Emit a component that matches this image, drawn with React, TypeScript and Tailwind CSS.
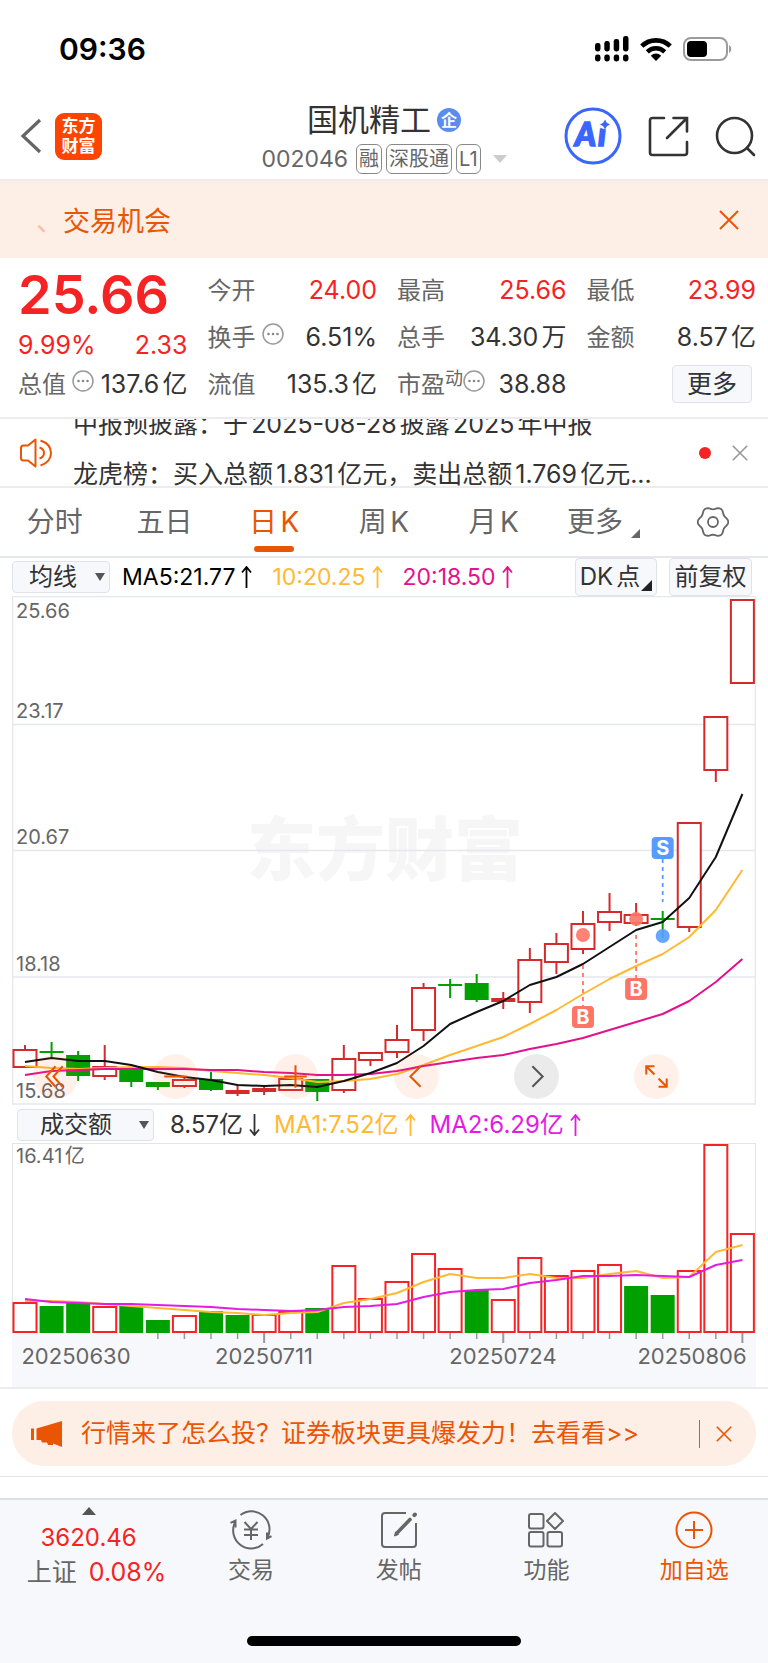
import React from 'react';

type Tone = 'up' | 'down';

interface Candle {
  high: number;
  top: number;
  bottom: number;
  low: number;
  tone: Tone;
  solid?: boolean;
}

const STEP = 26.57;
const FIRST = 13;
const cx = (i: number) => FIRST + i * STEP;

const toLine = (values: number[]) => values.map((v, i) => `${cx(i)},${v}`).join(' ');

const candles: Candle[] = [
  { high: 449, top: 454, bottom: 471, low: 471, tone: 'up' },
  { high: 446, top: 455, bottom: 457, low: 462, tone: 'down' },
  { high: 455, top: 459, bottom: 480, low: 485, tone: 'down' },
  { high: 449, top: 471, bottom: 480, low: 484, tone: 'up' },
  { high: 473, top: 473, bottom: 486, low: 491, tone: 'down' },
  { high: 486, top: 486, bottom: 491, low: 494, tone: 'down' },
  { high: 482, top: 484, bottom: 490, low: 492, tone: 'up' },
  { high: 476, top: 483, bottom: 494, low: 495, tone: 'down' },
  { high: 489, top: 494, bottom: 498, low: 500, tone: 'up', solid: true },
  { high: 489, top: 492, bottom: 496, low: 499, tone: 'up', solid: true },
  { high: 481, top: 483, bottom: 494, low: 495, tone: 'up' },
  { high: 483, top: 483, bottom: 496, low: 505, tone: 'down' },
  { high: 449, top: 463, bottom: 494, low: 497, tone: 'up' },
  { high: 456, top: 457, bottom: 464, low: 470, tone: 'up' },
  { high: 429, top: 444, bottom: 456, low: 462, tone: 'up' },
  { high: 387, top: 392, bottom: 434, low: 445, tone: 'up' },
  { high: 383, top: 388, bottom: 390, low: 402, tone: 'down' },
  { high: 378, top: 387, bottom: 404, low: 406, tone: 'down' },
  { high: 396, top: 402, bottom: 406, low: 413, tone: 'up', solid: true },
  { high: 352, top: 364, bottom: 406, low: 417, tone: 'up' },
  { high: 337, top: 348, bottom: 366, low: 378, tone: 'up' },
  { high: 315, top: 328, bottom: 353, low: 358, tone: 'up' },
  { high: 297, top: 316, bottom: 326, low: 335, tone: 'up' },
  { high: 307, top: 319, bottom: 327, low: 330, tone: 'up' },
  { high: 315, top: 322, bottom: 324, low: 342, tone: 'down' },
  { high: 227, top: 227, bottom: 331, low: 336, tone: 'up' },
  { high: 121, top: 121, bottom: 174, low: 186, tone: 'up' },
  { high: 4, top: 4, bottom: 87, low: 87, tone: 'up' },
];

const ma5 = [466, 462, 465, 465, 469, 476, 481, 484, 489, 490, 489, 491, 485, 477, 467, 450, 428, 416, 405, 389, 381, 368, 351, 334, 326, 302, 261, 198];
const ma10 = [470, 472, 473, 472, 471, 471, 472, 475, 477, 479, 482, 486, 485, 483, 478, 469, 459, 450, 441, 428, 414, 398, 383, 370, 358, 341, 314, 274];
const ma20 = [479, 475, 474, 473, 473, 473, 473, 474, 474, 476, 477, 479, 479, 478, 475, 470, 466, 462, 459, 453, 448, 442, 434, 426, 418, 405, 386, 363];

const priceLabels = [
  { text: '25.66', y: 22 },
  { text: '23.17', y: 122 },
  { text: '20.67', y: 248 },
  { text: '18.18', y: 375 },
  { text: '15.68', y: 502 },
];

const volumes: { top: number; tone: Tone }[] = [
  { top: 160, tone: 'up' },
  { top: 163, tone: 'down' },
  { top: 159, tone: 'down' },
  { top: 164, tone: 'up' },
  { top: 163, tone: 'down' },
  { top: 177, tone: 'down' },
  { top: 173, tone: 'up' },
  { top: 168, tone: 'down' },
  { top: 172, tone: 'down' },
  { top: 172, tone: 'up' },
  { top: 169, tone: 'up' },
  { top: 165, tone: 'down' },
  { top: 123, tone: 'up' },
  { top: 156, tone: 'up' },
  { top: 139, tone: 'up' },
  { top: 111, tone: 'up' },
  { top: 126, tone: 'up' },
  { top: 147, tone: 'down' },
  { top: 157, tone: 'up' },
  { top: 115, tone: 'up' },
  { top: 133, tone: 'up' },
  { top: 128, tone: 'up' },
  { top: 122, tone: 'up' },
  { top: 143, tone: 'down' },
  { top: 152, tone: 'down' },
  { top: 128, tone: 'up' },
  { top: 2, tone: 'up' },
  { top: 91, tone: 'up' },
];

const volMa1 = [158, 158, 159, 161, 163, 165, 167, 169, 170, 172, 170, 169, 160, 156, 150, 139, 131, 135, 135, 131, 135, 135, 131, 128, 135, 134, 109, 102];
const volMa2 = [156, 159, 160, 161, 161, 162, 163, 164, 166, 167, 168, 167, 164, 163, 161, 154, 149, 147, 146, 140, 137, 133, 133, 132, 133, 134, 122, 117];

const dates = [
  { text: '20250630', x: 64 },
  { text: '20250711', x: 252 },
  { text: '20250724', x: 491 },
  { text: '20250806', x: 680 },
];

// six soft lobes around the centre
const gearPoints = Array.from({ length: 72 }, (_, i) => {
  const angle = (i * Math.PI) / 36;
  const r = 14 + 1.3 * Math.cos(6 * angle);
  return `${16 + r * Math.cos(angle)},${16 + r * Math.sin(angle)}`;
}).join(' ');

const Dots: React.FC = () => (
  <svg className="w-[22px] h-[22px] shrink-0" viewBox="0 0 22 22" fill="none" aria-hidden="true">
    <circle cx="11" cy="11" r="10" stroke="#999" strokeWidth="1.5" />
    <circle cx="6.5" cy="11" r="1.3" fill="#888" />
    <circle cx="11" cy="11" r="1.3" fill="#888" />
    <circle cx="15.5" cy="11" r="1.3" fill="#888" />
  </svg>
);

const Cross: React.FC<{ className: string }> = ({ className }) => (
  <svg className={className} viewBox="0 0 20 20" fill="none" stroke="currentColor" strokeWidth="2" aria-hidden="true">
    <path d="M1 1L19 19M19 1L1 19" />
  </svg>
);

const Arrow: React.FC<{ down?: boolean }> = ({ down }) => (
  <svg
    className="ml-[6px] w-[11px] h-[22px]"
    viewBox="0 0 11 22"
    fill="none"
    stroke="currentColor"
    strokeWidth="1.8"
    role="img"
    aria-label={down ? '↓' : '↑'}
  >
    <path d={down ? 'M5.5 0V21M1 15.5L5.5 21L10 15.5' : 'M5.5 22V1M1 6.5L5.5 1L10 6.5'} />
  </svg>
);

const StatusBar: React.FC = () => (
  <div className="flex items-center justify-between h-[98px] pl-[59px] pr-[36px]">
    <span className="text-[30px] font-semibold text-black">09:36</span>
    <div className="flex items-center gap-[11px]">
      <svg className="w-[34px] h-[26px]" viewBox="0 0 34 26" aria-hidden="true">
        <rect x="0" y="7" width="5.5" height="8.5" rx="2.4" />
        <rect x="9.3" y="5" width="5.5" height="10.5" rx="2.4" />
        <rect x="18.7" y="3" width="5.5" height="12.5" rx="2.4" />
        <rect x="28" y="0" width="5.5" height="15.5" rx="2.4" />
        <rect x="0" y="18.5" width="5.5" height="7" rx="2.4" />
        <rect x="9.3" y="18.5" width="5.5" height="7" rx="2.4" />
        <rect x="18.7" y="18.5" width="5.5" height="7" rx="2.4" />
        <rect x="28" y="18.5" width="5.5" height="7" rx="2.4" />
      </svg>
      <svg className="w-8 h-6" viewBox="0 0 32 24" fill="none" aria-hidden="true">
        <path d="M1.8 9.2a20.2 20.2 0 0 1 28.4 0" stroke="#000" strokeWidth="4.6" />
        <path d="M7.3 14.9a12.3 12.3 0 0 1 17.4 0" stroke="#000" strokeWidth="4.4" />
        <path d="M16 24l-5.2-5.3a7.3 7.3 0 0 1 10.4 0z" fill="#000" />
      </svg>
      <svg className="w-[49px] h-6" viewBox="0 0 49 24" fill="none" aria-hidden="true">
        <rect x="1" y="1" width="43" height="22" rx="7" stroke="#9b9b9b" strokeWidth="2" />
        <rect x="4" y="4" width="20" height="16" rx="4" fill="#000" />
        <path d="M46 8c3 1.5 3 6.5 0 8z" fill="#9b9b9b" />
      </svg>
    </div>
  </div>
);

const Header: React.FC = () => (
  <header className="grid grid-cols-[1fr_auto_1fr] items-center h-[83px] px-3 pb-[5px] border-b-2 border-[#ececee]">
    <div className="flex items-center gap-[13px] pl-2">
      <button aria-label="返回">
        <svg className="w-[22px] h-9" viewBox="0 0 22 36" fill="none" stroke="#666" strokeWidth="3.2" aria-hidden="true">
          <path d="M20 2L3 18L20 34" />
        </svg>
      </button>
      <a href="#" className="flex flex-col items-center justify-center w-[47px] h-[47px] rounded-[9px] bg-[#ff4400] text-white text-[17px] leading-[20px] font-bold">
        <span>东方</span>
        <span>财富</span>
      </a>
    </div>
    <div className="flex flex-col items-center gap-[6px] mt-1">
      <h1 className="flex items-center gap-[6px] text-[31px] leading-9 text-[#333]">
        国机精工
        <span className="flex items-center justify-center w-6 h-6 rounded-full bg-[#5b8def] text-white text-[16px] leading-6 font-bold">企</span>
      </h1>
      <div className="flex items-center gap-1 text-[23px] leading-[30px] text-[#666]">
        <span className="mr-1">002046</span>
        <span className="px-[2px] h-[30px] text-[20px] leading-[28px] border border-[#888] rounded-md">融</span>
        <span className="px-[2px] h-[30px] text-[20px] leading-[28px] border border-[#888] rounded-md">深股通</span>
        <span className="px-[2px] h-[30px] text-[20px] leading-[28px] border border-[#888] rounded-md">L1</span>
        <svg className="ml-2 w-[14px] h-2" viewBox="0 0 14 8" aria-hidden="true">
          <path d="M0 0H14L7 8z" fill="#ccc" />
        </svg>
      </div>
    </div>
    <div className="flex items-center justify-end gap-[26px]">
      <button aria-label="Ai">
        <svg className="w-[58px] h-[58px]" viewBox="0 0 58 58" aria-hidden="true">
          <circle cx="29" cy="29" r="27" fill="none" stroke="#3a66ff" strokeWidth="3" />
          <text
            x="11 34"
            y="39"
            fontFamily="Lato, Inter, sans-serif"
            fontWeight="900"
            fontSize="32"
            fontStyle="italic"
            fill="#3a66ff"
            stroke="#3a66ff"
            strokeWidth="1.6"
          >
            Ai
          </text>
          <circle cx="41" cy="16.5" r="5.8" fill="#fff" />
          <path d="M41 12.5L42.8 15.7L46 17.5L42.8 19.3L41 22.5L39.2 19.3L36 17.5L39.2 15.7z" fill="#3a66ff" />
        </svg>
      </button>
      <button aria-label="分享">
        <svg className="w-[41px] h-[41px]" viewBox="0 0 41 41" fill="none" stroke="#333" strokeWidth="2.6" strokeLinecap="round" aria-hidden="true">
          <path d="M16 2H4.5Q2 2 2 4.5V36.5Q2 39 4.5 39H36.5Q39 39 39 36.5V26" />
          <path d="M19 22L38 3M25.5 2H39V15.5" />
        </svg>
      </button>
      <button aria-label="搜索">
        <svg className="w-[41px] h-[41px]" viewBox="0 0 41 41" fill="none" stroke="#333" strokeWidth="2.6" strokeLinecap="round" aria-hidden="true">
          <circle cx="19.5" cy="19.5" r="17.5" />
          <path d="M32 32L39 39" />
        </svg>
      </button>
    </div>
  </header>
);

const Notice: React.FC = () => (
  <div className="flex items-center justify-between h-[77px] pl-9 pr-[29px] bg-[#fdeee6] text-[#ea5504]">
    <span className="pt-1 text-[27px] leading-10">
      <span className="opacity-30">、</span>交易机会
    </span>
    <button aria-label="关闭">
      <Cross className="w-5 h-5" />
    </button>
  </div>
);

interface StatProps {
  label: string;
  value: string;
  red?: boolean;
  sup?: string;
  dots?: boolean;
}

const Stat: React.FC<StatProps> = ({ label, value, red, sup, dots }) => (
  <div className="flex items-center justify-between h-[47px] whitespace-nowrap">
    <span className="flex items-center text-2xl text-[#666]">
      {label}
      {sup && <span className="mb-3 text-lg leading-5">{sup}</span>}
      {dots && (
        <span className={sup ? 'mb-2' : 'mb-2 ml-[6px]'}>
          <Dots />
        </span>
      )}
    </span>
    <span className={red ? 'text-[#f52323]' : 'text-[#333]'}>{value}</span>
  </div>
);

const Quote: React.FC = () => (
  <section className="grid grid-cols-4 gap-x-5 pt-[9px] pb-[9px] pl-[18px] pr-3 text-[25px] [text-autospace:normal]">
    <div>
      <div className="flex flex-col justify-between h-[94px] text-[#f52323]">
        <span className="text-[54px] leading-[56px] font-semibold">25.66</span>
        <div className="flex items-center justify-between leading-8">
          <span>9.99%</span>
          <span>2.33</span>
        </div>
      </div>
      <Stat label="总值" value="137.6亿" dots />
    </div>
    <div>
      <Stat label="今开" value="24.00" red />
      <Stat label="换手" value="6.51%" dots />
      <Stat label="流值" value="135.3亿" />
    </div>
    <div>
      <Stat label="最高" value="25.66" red />
      <Stat label="总手" value="34.30万" />
      <Stat label="市盈" value="38.88" sup="动" dots />
    </div>
    <div>
      <Stat label="最低" value="23.99" red />
      <Stat label="金额" value="8.57亿" />
      <div className="flex justify-end pr-1 pt-1">
        <button className="w-20 h-[38px] rounded border border-[#dfe3e8] bg-[#f7f8fb] leading-9 text-[#333]">更多</button>
      </div>
    </div>
  </section>
);

const Ticker: React.FC = () => (
  <section className="flex items-center h-[71px] pl-5 pr-5 border-y-2 border-[#ececee] overflow-hidden">
    <svg className="w-8 h-[30px] shrink-0" viewBox="0 0 32 30" fill="none" stroke="#ea5504" strokeWidth="2" aria-hidden="true">
      <path d="M15.5 1.5V28.5L8 22.5H3.5Q1 22.5 1 20V10Q1 7.5 3.5 7.5H8z" strokeLinejoin="round" />
      <path d="M19.5 9.5Q24 11 24 15T19.5 20.5" />
      <path d="M20.5 2.5Q31 6 31 15T20.5 27.5" />
    </svg>
    <div className="flex-1 self-start -mt-5 ml-[21px] text-[25px] leading-[50px] text-[#333] whitespace-nowrap [text-autospace:normal]">
      <p>中报预披露：于2025-08-28披露2025年中报</p>
      <p>龙虎榜：买入总额1.831亿元，卖出总额1.769亿元...</p>
    </div>
    <span className="w-3 h-3 mr-[21px] rounded-full bg-[#f52323]"></span>
    <button aria-label="关闭" className="text-[#999]">
      <Cross className="w-4 h-4" />
    </button>
  </section>
);

const tabs = ['分时', '五日', '日K', '周K', '月K'];

const Tabs: React.FC = () => (
  <nav className="grid grid-cols-7 h-[70px] border-b-2 border-[#e4e8ec] text-[28px] text-[#666] [text-autospace:normal]">
    {tabs.map((tab) => (
      <button key={tab} className={tab === '日K' ? 'relative text-[#ea5504]' : 'relative'}>
        {tab}
        {tab === '日K' && <span className="absolute bottom-1 left-1/2 -translate-x-1/2 w-10 h-[6px] rounded-full bg-[#ea5504]"></span>}
      </button>
    ))}
    <button className="flex items-center justify-center">
      更多
      <svg className="self-end mb-[18px] ml-2 w-[9px] h-[9px]" viewBox="0 0 9 9" aria-hidden="true">
        <path d="M9 0V9H0z" fill="#666" />
      </svg>
    </button>
    <button aria-label="设置" className="flex items-center justify-center">
      <svg className="w-8 h-8" viewBox="0 0 32 32" fill="none" stroke="#666" strokeWidth="1.8" strokeLinejoin="round" aria-hidden="true">
        <polygon points={gearPoints} />
        <circle cx="16" cy="16" r="5" />
      </svg>
    </button>
  </nav>
);

const Picker: React.FC<{ label: string; option: string; className: string }> = ({ label, option, className }) => (
  <div className="relative flex">
    <select aria-label={label} className={className}>
      <option>{option}</option>
    </select>
    <svg className="absolute right-[5px] top-3 w-[10px] h-2 pointer-events-none" viewBox="0 0 10 8" aria-hidden="true">
      <path d="M0 0H10L5 8z" fill="#555" />
    </svg>
  </div>
);

const Marker: React.FC<{ x: number; dot: number; from: number; to: number; box: number; text: string; color: string }> = ({
  x,
  dot,
  from,
  to,
  box,
  text,
  color,
}) => (
  <g>
    <line x1={x} x2={x} y1={from} y2={to} stroke={color} strokeWidth="1.8" strokeDasharray="4 4" />
    <circle cx={x} cy={dot} r="7" fill={color} fillOpacity="0.9" />
    <rect x={x - 11} y={box - 11} width="22" height="22" rx="4" fill={color} />
    <text x={x} y={box + 7} textAnchor="middle" fontSize="20" fontWeight="700" fill="#fff">
      {text}
    </text>
  </g>
);

const ChartButton: React.FC<{ label: string; path: string; gray?: boolean }> = ({ label, path, gray }) => (
  <button
    aria-label={label}
    className={gray ? 'w-[45px] h-[45px] rounded-full bg-black/8 text-[#555]' : 'w-[45px] h-[45px] rounded-full bg-[#ff6414]/9 text-[#ea5504]'}
  >
    <svg viewBox="0 0 44 44" fill="none" stroke="currentColor" strokeWidth="2" aria-hidden="true">
      <path d={path} />
    </svg>
  </button>
);

const PriceChart: React.FC = () => (
  <div className="relative mx-3">
    <svg className="block w-full h-auto" viewBox="0 0 744 509" role="img" aria-label="日K">
      <text x="373" y="279" textAnchor="middle" fontSize="69" fontWeight="900" fill="#f6f6f6">
        东方财富
      </text>
      <g stroke="#e4e7ee" strokeWidth="1.5">
        <rect x="0.5" y="0.5" width="743" height="507.5" fill="none" />
        {[128.5, 254.5, 381].map((y) => (
          <line key={y} x1="0" x2="744" y1={y} y2={y} />
        ))}
      </g>
      {candles.map((c, i) => {
        const color = c.tone === 'up' ? '#d42a2a' : '#00a000';
        const filled = c.tone === 'down' || c.solid;
        return (
          <g key={i} stroke={color} strokeWidth="2">
            <line x1={cx(i)} x2={cx(i)} y1={c.high} y2={c.top} />
            <line x1={cx(i)} x2={cx(i)} y1={c.bottom} y2={c.low} />
            {filled ? (
              <rect x={cx(i) - 12} y={c.top} width="24" height={c.bottom - c.top} fill={color} stroke="none" />
            ) : (
              <rect x={cx(i) - 11.5} y={c.top} width="23" height={c.bottom - c.top} fill="#fff" />
            )}
          </g>
        );
      })}
      <g fontSize="20" fill="#666">
        {priceLabels.map((l) => (
          <text key={l.text} x="4" y={l.y}>
            {l.text}
          </text>
        ))}
      </g>
      <g fill="none" strokeWidth="2" strokeLinejoin="round">
        <polyline points={toLine(ma10)} stroke="#ffb932" />
        <polyline points={toLine(ma20)} stroke="#e5108c" />
        <polyline points={toLine(ma5)} stroke="#111" />
      </g>
      <Marker x={cx(21)} dot={339} from={369} to={410} box={421} text="B" color="#ff7565" />
      <Marker x={cx(23)} dot={323} from={339} to={382} box={393} text="B" color="#ff7565" />
      <Marker x={cx(24)} dot={340} from={263} to={306} box={252} text="S" color="#569cff" />
    </svg>
    <div className="absolute bottom-[6px] left-[21px] right-[77px] flex justify-between">
      <ChartButton label="最左" path="M22 12L13 22L22 32M29 12L20 22L29 32" />
      <ChartButton label="缩小" path="M11 22H33" />
      <ChartButton label="放大" path="M11 22H33M22 11V33" />
      <ChartButton label="左移" path="M26 12L16 22L26 32" />
      <ChartButton label="右移" path="M18 12L28 22L18 32" gray />
      <ChartButton label="全屏" path="M12 20V12H20M12 12L20 20M24 24L32 32M24 32H32V24" />
    </div>
  </div>
);

const VolumeChart: React.FC = () => (
  <svg className="block mx-3 h-auto" viewBox="0 0 744 244" role="img" aria-label="成交额">
    <rect x="0.5" y="0.5" width="743" height="190" fill="none" stroke="#e2e4e8" />
    <rect x="0" y="190" width="744" height="54" fill="#f7f8fb" />
    {volumes.map((v, i) =>
      v.tone === 'up' ? (
        <rect key={i} x={cx(i) - 11.5} y={v.top} width="23" height={189 - v.top} fill="#fff" stroke="#f52323" strokeWidth="2" />
      ) : (
        <rect key={i} x={cx(i) - 12} y={v.top} width="24" height={190 - v.top} fill="#00a000" />
      ),
    )}
    {volumes.map((_, i) =>
      i < 5 ? null : (
        <line key={i} x1={cx(i)} x2={cx(i)} y1="190" y2={i % 9 === 0 ? 200 : 196} stroke="#999" strokeWidth={i % 9 === 0 ? 2 : 1.5} />
      ),
    )}
    <g fill="none" strokeWidth="2" strokeLinejoin="round">
      <polyline points={toLine(volMa1)} stroke="#ffb932" />
      <polyline points={toLine(volMa2)} stroke="#e31be3" />
    </g>
    <text x="4" y="20" fontSize="20" fill="#666" className="[text-autospace:normal]">
      16.41亿
    </text>
    <g fontSize="22" fill="#666" textAnchor="middle">
      {dates.map((d) => (
        <text key={d.text} x={d.x} y="221">
          {d.text}
        </text>
      ))}
    </g>
  </svg>
);

const Charts: React.FC = () => (
  <section className="border-b-2 border-[#ececee]">
    <div className="flex items-center h-[38px] px-3 text-2xl whitespace-nowrap">
      <Picker
        label="主图指标"
        option="均线"
        className="appearance-none w-[98px] h-8 pl-4 rounded border border-[#dfe3e8] bg-[#f7f8fb] leading-[30px] text-[#333]"
      />
      <div className="flex items-center gap-5 ml-3 text-[23px]">
        <span className="flex items-center text-black">
          MA5:21.77
          <Arrow />
        </span>
        <span className="flex items-center text-[#ffb932]">
          10:20.25
          <Arrow />
        </span>
        <span className="flex items-center text-[#e5108c]">
          20:18.50
          <Arrow />
        </span>
      </div>
      <button className="relative ml-auto w-[82px] h-[38px] pr-3 rounded border border-[#dfe3e8] bg-[#f7f8fb] text-[#333] [text-autospace:normal]">
        DK点
        <svg className="absolute right-1 bottom-1 w-[11px] h-[11px]" viewBox="0 0 11 11" aria-hidden="true">
          <path d="M11 0V11H0z" fill="#222" />
        </svg>
      </button>
      <button className="ml-3 mr-1 w-[83px] h-[38px] rounded border border-[#dfe3e8] bg-[#f7f8fb] text-[#333]">前复权</button>
    </div>
    <PriceChart />
    <div className="flex items-center h-[38px] pt-[2px] pl-[17px] pr-3 text-2xl whitespace-nowrap">
      <Picker
        label="副图指标"
        option="成交额"
        className="appearance-none w-[137px] h-8 pl-[22px] rounded border border-[#dfe3e8] bg-[#f7f8fb] leading-[30px] text-[#333]"
      />
      <div className="flex items-center gap-[14px] ml-4">
        <span className="flex items-center text-[#333]">
          8.57亿
          <Arrow down />
        </span>
        <span className="flex items-center text-[#ffb932]">
          MA1:7.52亿
          <Arrow />
        </span>
        <span className="flex items-center text-[#e31be3]">
          MA2:6.29亿
          <Arrow />
        </span>
      </div>
    </div>
    <VolumeChart />
  </section>
);

const Promo: React.FC = () => (
  <section className="px-3 pt-3 pb-[10px] border-b border-[#e2e4e8]">
    <div className="flex items-center h-[65px] pl-[19px] pr-[24px] rounded-[32px] bg-[#fdeee6] text-[#ea5504]">
      <svg className="w-[31px] h-[26px] shrink-0" viewBox="0 0 31 26" fill="currentColor" aria-hidden="true">
        <path d="M0 7.5H3V19H0zM5.5 7.5L31 0V26L22 22.5V24H17L16 21.5H11L10 19H5.5z" />
      </svg>
      <a href="#" className="ml-[19px] text-[25px] whitespace-nowrap">行情来了怎么投？证券板块更具爆发力！去看看&gt;&gt;</a>
      <span className="ml-auto mr-4 w-[1px] h-7 bg-[#ea5504]"></span>
      <button aria-label="关闭">
        <Cross className="w-4 h-4" />
      </button>
    </div>
  </section>
);

const NavItem: React.FC<{ label: string; active?: boolean; children: React.ReactNode }> = ({ label, active, children }) => (
  <a href="#" className={active ? 'flex flex-col items-center pt-[10px] text-[#ea5504]' : 'flex flex-col items-center pt-[10px] text-[#666]'}>
    <svg className="w-[42px] h-10" viewBox="0 0 42 40" fill="none" stroke="currentColor" strokeWidth="2" aria-hidden="true">
      {children}
    </svg>
    <span className="mt-[2px] text-[23px] leading-9">{label}</span>
  </a>
);

const BottomNav: React.FC = () => (
  <footer className="mt-[21px] border-t-2 border-[#dcdfe3] bg-[#f7f8fb]">
    <div className="grid grid-cols-[6fr_5fr_5fr_5fr_5fr] h-[136px]">
      <a href="#" className="flex flex-col items-center pt-[7px] text-2xl text-[#f52323]">
        <svg className="w-[14px] h-2" viewBox="0 0 14 8" aria-hidden="true">
          <path d="M7 0L14 8H0z" fill="#555" />
        </svg>
        <span className="mt-[6px] leading-[34px]">3620.46</span>
        <span className="flex gap-3 pl-4 text-[25px] leading-[34px] whitespace-nowrap">
          <span className="text-[#666]">上证</span>
          <span>0.08%</span>
        </span>
      </a>
      <NavItem label="交易">
        <path d="M10.5 5A18 18 0 0 1 37.5 27.5M33 34A18 18 0 0 1 5 12.5" />
        <path d="M0.5 12.8L5.5 10.5V17.5M41.5 26.2L37 28.5V22.5" />
        <path d="M14.5 12L21 19L27.5 12M21 19V30M14 19.5H28M14 25H28" />
      </NavItem>
      <NavItem label="发帖">
        <path d="M28 3H7Q4 3 4 6V34Q4 37 7 37H35Q38 37 38 34V13" />
        <path d="M32 9.5L19 23" strokeWidth="3.6" strokeLinecap="round" />
        <path d="M16.5 26L17.5 22L20.5 24.5z" fill="currentColor" strokeWidth="1" />
        <path d="M36.3 5.2L37 4.5" strokeWidth="4" strokeLinecap="round" />
      </NavItem>
      <NavItem label="功能">
        <rect x="4" y="4" width="14.5" height="14.5" rx="2" />
        <rect x="4" y="22" width="14.5" height="14.5" rx="2" />
        <rect x="22.5" y="22" width="14.5" height="14.5" rx="2" />
        <path d="M30 3L38 11L30 19L22 11z" strokeLinejoin="round" />
      </NavItem>
      <NavItem label="加自选" active>
        <circle cx="21" cy="20" r="17.5" />
        <path d="M21 11V29M12 20H30" />
      </NavItem>
    </div>
    <div className="flex justify-center pb-[17px]">
      <span className="w-[274px] h-[10px] rounded-full bg-black"></span>
    </div>
  </footer>
);

const App: React.FC = () => {
  return (
    <main className="bg-white font-[Inter,'Noto_Sans_CJK_SC',sans-serif]">
      <StatusBar />
      <Header />
      <Notice />
      <Quote />
      <Ticker />
      <Tabs />
      <Charts />
      <Promo />
      <BottomNav />
    </main>
  );
};

export default App;
